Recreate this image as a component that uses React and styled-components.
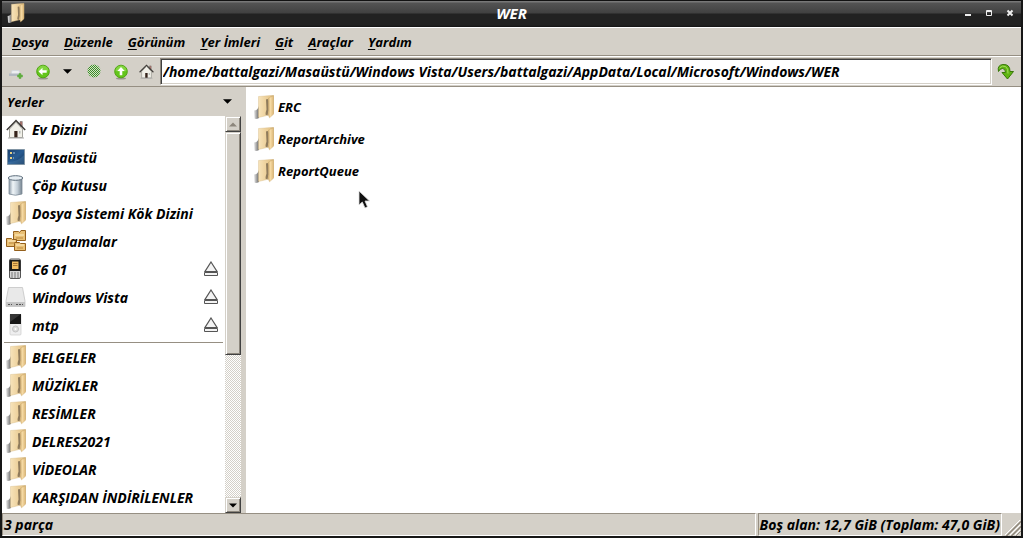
import React, { useState } from 'react';
import styled, { createGlobalStyle } from 'styled-components';

const GlobalStyle = createGlobalStyle`
  * { box-sizing: border-box; }
  body { margin: 0; }
  body, button, input {
    font-family: 'Open Sans', 'Noto Sans', sans-serif;
    font-size: 14px;
    font-weight: 700;
    font-style: italic;
    color: #000;
  }
  button {
    border: none;
    background: none;
    padding: 0;
    text-align: left;
    cursor: default;
  }
  svg { display: block; flex: none; }
`;
const Window = styled.div`
  display: flex;
  flex-direction: column;
  height: 100vh;
  border: solid #161616;
  border-width: 0 2px 2px;
  background: #d4d0c8;
  overflow: hidden;
`;
const TitleBar = styled.header`
  display: flex;
  align-items: center;
  flex: none;
  height: 27px;
  padding: 0 4px 2px;
  color: #fff;
  border-top: 1px solid #111;
  background: linear-gradient(#777 0 1px, #535353 2px, #414141 12px, #222 13px, #222 24px, #141414);
`;
const TitleSide = styled.div`
  display: flex;
  flex: 1;
  justify-content: ${(p) => (p.$end ? 'flex-end' : 'flex-start')};
  gap: 7px;
`;
const Title = styled.h1`
  margin: 0;
  font-size: 15px;
  line-height: 24px;
`;
const WindowButton = styled.button`
  display: grid;
  place-items: center;
  width: 14px;
  height: 20px;
`;
const MenuBar = styled.nav`
  display: flex;
  align-items: center;
  flex: none;
  gap: 1px;
  height: 29px;
  padding: 0 3px;
  border-top: 1px solid #fff;
  border-bottom: 1px solid #968f83;
`;
const MenuButton = styled.button`
  height: 24px;
  padding: 0 7px;
  font-size: 13px;
  u { text-underline-offset: 2px; }
`;
const Toolbar = styled.div`
  display: flex;
  align-items: center;
  flex: none;
  height: 31px;
  padding-right: 5px;
  border-top: 1px solid #fff;
  border-bottom: 1px solid #968f83;
`;
const ToolButton = styled.button`
  display: grid;
  place-items: center;
  flex: none;
  width: ${(p) => p.$width || 26}px;
  height: 26px;
`;
const PathInput = styled.input`
  flex: 1;
  min-width: 0;
  height: 27px;
  margin-right: 4px;
  padding: 0 2px;
  border: 1px solid;
  border-color: #8c867c #fff #fff #8c867c;
  border-radius: 0;
  box-shadow: inset 1px 1px #404040, inset -1px -1px #d4d0c8;
  background: #fff;
  outline: none;
`;
const Body = styled.div`
  display: flex;
  flex: 1;
  min-height: 0;
`;
const Sidebar = styled.aside`
  display: flex;
  flex-direction: column;
  flex: none;
  width: 244px;
  padding-right: 5px;
`;
const SidebarHeader = styled.button`
  display: flex;
  align-items: center;
  justify-content: space-between;
  flex: none;
  height: 29px;
  padding: 0 9px 0 5px;
  font-size: 13px;
`;
const SidebarBody = styled.div`
  display: flex;
  flex: 1;
  min-height: 0;
`;
const Places = styled.ul`
  flex: 1;
  margin: 0;
  padding: 0;
  list-style: none;
  background: #fff;
  overflow: hidden;
`;
const PlaceRow = styled.li`
  display: flex;
  align-items: center;
  height: 28px;
  padding: 0 6px 2px 4px;
`;
const PlaceButton = styled.button`
  display: flex;
  align-items: center;
  flex: 1;
  gap: 6px;
  height: 26px;
  white-space: nowrap;
`;
const IconSlot = styled.span`
  display: flex;
  align-items: center;
  justify-content: center;
  width: 20px;
`;
const Separator = styled.li`
  height: 4px;
  padding: 2px 2px 0;
  background: #968f83 content-box;
  border-bottom: 1px solid #fff;
`;
const ScrollBar = styled.div`
  display: flex;
  flex-direction: column;
  width: 16px;
  background: repeating-conic-gradient(#d4d0c8 0 25%, #fff 0 50%) 0 0 / 2px 2px;
`;
const Raised = styled.button`
  display: grid;
  place-items: center;
  flex: none;
  height: ${(p) => p.$height}px;
  border: 1px solid;
  border-color: #d4d0c8 #404040 #404040 #d4d0c8;
  box-shadow: inset 1px 1px #fff, inset -1px -1px #8c867c;
  background: #d4d0c8;
`;
const ScrollSpace = styled.div`
  flex: 1;
`;
const Files = styled.main`
  position: relative;
  flex: 1;
  padding: 4px 8px;
  background: #fff;
`;
const FileButton = styled.button`
  display: flex;
  align-items: center;
  gap: 4px;
  height: 32px;
  font-size: 13px;
`;
const Pointer = styled.svg`
  position: absolute;
  left: 112px;
  top: 103px;
`;
const StatusBar = styled.footer`
  display: flex;
  flex: none;
  gap: 2px;
  height: 23px;
`;
const StatusCell = styled.div`
  flex: ${(p) => (p.$grow ? 1 : 'none')};
  padding: 0 1px;
  line-height: 21px;
  white-space: nowrap;
  border: 1px solid;
  border-color: #968f83 #fff #fff #968f83;
`;
const Grip = styled.svg`
  align-self: flex-end;
`;

const FolderIcon = ({ size = 24 }) => (
  <svg width={size === 24 ? 20 : size} height={size} viewBox="0 0 20 24" aria-hidden="true">
    <defs>
      <linearGradient id="folderBack">
        <stop offset="0" stopColor="#f7e3ba" />
        <stop offset=".75" stopColor="#e8c88d" />
        <stop offset="1" stopColor="#c4a570" />
      </linearGradient>
      <linearGradient id="folderFront">
        <stop offset="0" stopColor="#cbaa70" />
        <stop offset=".35" stopColor="#f8dda8" />
        <stop offset="1" stopColor="#dcb777" />
      </linearGradient>
      <linearGradient id="folderBase">
        <stop offset="0" stopColor="#e8e8e8" />
        <stop offset=".6" stopColor="#999" />
        <stop offset="1" stopColor="#606060" />
      </linearGradient>
    </defs>
    <path d="M0 15.500q3.500 0 5-4.500v12q-3 1.500-4.500.5z" fill="url(#folderBase)" />
    <path d="M4.500 1.500 19.500.3v18L15 20 4.500 22.500z" fill="url(#folderBack)" stroke="#d6ba87" strokeWidth=".4" />
    <path d="M12 4.500q2.500-1.500 2.500 2v9l-1 5-2-1q.2-3 1-5z" fill="#8f7b5c" />
    <path d="M14.500 3 19.500.8v18.500L15.500 22.800q-2-3-.5-7z" fill="url(#folderFront)" stroke="#cda969" strokeWidth=".4" />
  </svg>
);

const HomeIcon = ({ size = 20 }) => (
  <svg width={size} height={size} viewBox="0 0 20 20" aria-hidden="true">
    <path d="M14 2.500h2.300v5H14z" fill="#b0746c" stroke="#666" strokeWidth=".5" />
    <path d="M3.500 10 10 3.200l6.500 6.800v8.500h-13z" fill="#f1f0e9" stroke="#8d8d85" strokeWidth=".8" />
    <path d="M.8 11 10 1.600l9.200 9.400" fill="none" stroke="#3c3936" strokeWidth="1.500" />
    <path d="M8.300 12h3.200v6.500H8.300z" fill="#35231b" />
    <path d="M13 12h1.500v2.500H13z" fill="#b5bbb9" />
    <path d="M2 19h16" stroke="#aaa" />
  </svg>
);

const DesktopIcon = () => (
  <svg width="20" height="20" viewBox="0 0 20 20" aria-hidden="true">
    <defs>
      <linearGradient id="screen" x2="1" y2="1">
        <stop offset="0" stopColor="#1c416e" />
        <stop offset=".5" stopColor="#285b91" />
        <stop offset="1" stopColor="#123052" />
      </linearGradient>
    </defs>
    <path d="M1.500 2.500h17v15h-17z" fill="url(#screen)" stroke="#8195a5" />
    <path d="M4 5h2v2H4zM4 10h2v2H4z" fill="#e8cf83" />
    <path d="M7 6h2M7 11h1" stroke="#a9c5df" />
    <path d="M2 17h16V8q-6 7-16 7" fill="#5789b7" opacity=".35" />
  </svg>
);

const TrashIcon = () => (
  <svg width="20" height="22" viewBox="1 0 20 22" aria-hidden="true">
    <defs>
      <linearGradient id="can">
        <stop offset="0" stopColor="#8998a5" />
        <stop offset=".3" stopColor="#f0f5f8" />
        <stop offset=".65" stopColor="#c3ced7" />
        <stop offset="1" stopColor="#75838f" />
      </linearGradient>
    </defs>
    <path d="M4 4v16q6.500 2.500 13 0V4z" fill="url(#can)" stroke="#7d8b97" strokeWidth=".8" />
    <ellipse cx="10.500" cy="4" rx="7.300" ry="2.300" fill="#e6edf2" stroke="#5e6e7c" />
  </svg>
);

const AppsIcon = () => (
  <svg width="22" height="22" viewBox="0 0 22 22" aria-hidden="true">
    <g fill="#e9c075" stroke="#94601d">
      <path d="M8.500 3.500v-2h5l1 1 1.500-2h4.500v10h-12z" />
      <path d="M1.500 8.500h5l1 1h4v7h-10z" />
      <path d="M9.500 12.500h5l1 1h5v7h-11z" />
    </g>
    <path d="M10 5h9M3 11h7M11 15h8" stroke="#fff0c9" />
    <path d="M11 8h7M4 13h6M12 18h6" stroke="#bd8b41" />
  </svg>
);

const PhoneIcon = () => (
  <svg width="22" height="22" viewBox="0 0 22 22" aria-hidden="true">
    <rect x="4.500" y="1" width="11" height="19.500" rx="1.500" fill="#d6d6d6" stroke="#555" />
    <path d="M4.500 2h11v11h-11z" fill="#1b1b1b" />
    <path d="M7 3.500h6.500V11H7z" fill="#f1bd63" />
    <path d="M8 5.500h4.500M8 7.500h4.500" stroke="#855821" strokeWidth=".7" />
    <path d="M6 15h8M6 17h8M6 19h8" stroke="#777" strokeDasharray="2 1" />
  </svg>
);

const DriveIcon = () => (
  <svg width="22" height="22" viewBox="0 0 22 22" aria-hidden="true">
    <path d="M3.500 1.500h14L20 15v5.500H1V15z" fill="#e9e9e9" stroke="#c4c4c4" strokeWidth=".8" />
    <path d="M1 16h19v4.500H1z" fill="#c4c4c4" />
    <path d="M3 18.500h4M11 18.500h7" stroke="#555" strokeDasharray="2 1" />
  </svg>
);

const PlayerIcon = () => (
  <svg width="22" height="22" viewBox="0 0 22 22" aria-hidden="true">
    <rect x="5" y="0" width="11" height="21" rx="1" fill="#eeeeef" stroke="#ccc" strokeWidth=".7" />
    <path d="M5 0h11v10H5z" fill="#171717" />
    <path d="M5 0h11L5 8z" fill="#353535" />
    <circle cx="10.500" cy="15" r="3" fill="#ddd" stroke="#c2c2c2" />
    <circle cx="10.500" cy="15" r="1" fill="#fff" />
  </svg>
);

const EjectIcon = () => (
  <svg width="16" height="16" viewBox="0 0 16 16" fill="#f3f3f3" stroke="#555" aria-hidden="true">
    <path d="M8 1 14 10.500H2z" strokeWidth="1.200" />
    <path d="M1.500 11.500h13v3h-13z" />
  </svg>
);

const GreenArrow = ({ up }) => (
  <svg width="16" height="16" viewBox="0 0 16 16" aria-hidden="true">
    <ellipse cx="8" cy="14.500" rx="5" ry="1" fill="#99968e" />
    <circle cx="8" cy="7.500" r="6.300" fill="#63c51b" stroke="#51a414" />
    <path d="M2.500 7a5.500 5.500 0 0 1 11 0q-5 1-11 0" fill="#98df58" opacity=".6" />
    <path d="M3.500 7.500 7.500 3.800v2.400h4.200v2.600H7.500v2.400z" fill="#fff" transform={up ? 'rotate(90 8 7.500)' : undefined} />
  </svg>
);

const NewTabIcon = () => (
  <svg width="16" height="16" viewBox="0 0 16 16" aria-hidden="true">
    <path d="M4 6.500h7l1 4H3z" fill="#eceef0" stroke="#d3d8dc" />
    <path d="M1 9.500h12V12H1z" fill="#b3b9c2" />
    <path d="M9.500 11H11V9.500h2V11h1.500v2H13v1.500h-2V13H9.500z" fill="#60ad40" stroke="#60ad40" strokeWidth=".5" />
  </svg>
);

const StopIcon = () => (
  <svg width="16" height="16" viewBox="0 0 16 16" aria-hidden="true">
    <defs>
      <pattern id="dither" width="2" height="2" patternUnits="userSpaceOnUse">
        <path d="M0 0h1v1H0zM1 1h1v1H1z" fill="#3c8a28" />
        <path d="M1 0h1v1H1zM0 1h1v1H0z" fill="#d3e4c6" />
      </pattern>
    </defs>
    <circle cx="8" cy="7" r="6.500" fill="url(#dither)" />
  </svg>
);

const GoIcon = () => (
  <svg width="18" height="18" viewBox="0 0 18 18" aria-hidden="true">
    <path
      d="M1.500 8.500Q0 2 6 1.500q7-.5 7 7h3.500L10.500 16 5 9.500h3.500q0-4-3-4-2.500 0-4 3z"
      fill="#5fb512"
      stroke="#39780a"
    />
    <path d="M2.500 5q3-3 6-1.500 3 2 2.500 7" fill="none" stroke="#a7df60" />
  </svg>
);

const Triangle = ({ width = 9, up, color = '#000' }) => (
  <svg width={width} height="5" viewBox="0 0 10 5" aria-hidden="true">
    <path d={up ? 'M0 5 5 0l5 5z' : 'M0 0h10L5 5z'} fill={color} />
  </svg>
);

const menus = [
  ['D', 'osya'],
  ['D', 'üzenle'],
  ['G', 'örünüm'],
  ['Y', 'er İmleri'],
  ['G', 'it'],
  ['A', 'raçlar'],
  ['Y', 'ardım'],
];
const places = [
  { name: 'Ev Dizini', Icon: HomeIcon },
  { name: 'Masaüstü', Icon: DesktopIcon },
  { name: 'Çöp Kutusu', Icon: TrashIcon },
  { name: 'Dosya Sistemi Kök Dizini', Icon: FolderIcon },
  { name: 'Uygulamalar', Icon: AppsIcon },
  { name: 'C6 01', Icon: PhoneIcon, eject: true },
  { name: 'Windows Vista', Icon: DriveIcon, eject: true },
  { name: 'mtp', Icon: PlayerIcon, eject: true },
];
const bookmarks = ['BELGELER', 'MÜZİKLER', 'RESİMLER', 'DELRES2021', 'VİDEOLAR', 'KARŞIDAN İNDİRİLENLER'];
const files = ['ERC', 'ReportArchive', 'ReportQueue'];

const Place = ({ name, Icon, eject }) => (
  <PlaceRow>
    <PlaceButton>
      <IconSlot><Icon /></IconSlot>
      {name}
    </PlaceButton>
    {eject && <button aria-label={`${name} çıkar`}><EjectIcon /></button>}
  </PlaceRow>
);

const App = () => {
  const [path, setPath] = useState(
    '/home/battalgazi/Masaüstü/Windows Vista/Users/battalgazi/AppData/Local/Microsoft/Windows/WER'
  );
  return (
    <Window>
      <GlobalStyle />
      <TitleBar>
        <TitleSide><FolderIcon size={20} /></TitleSide>
        <Title>WER</Title>
        <TitleSide $end>
          <WindowButton aria-label="Küçült">
            <svg width="8" height="8"><path d="M1 5h6v2H1z" fill="#eee" /></svg>
          </WindowButton>
          <WindowButton aria-label="Büyüt">
            <svg width="8" height="8"><path d="M1.500 1.500h5v5h-5zM1 2.500h6" fill="none" stroke="#eee" /></svg>
          </WindowButton>
          <WindowButton aria-label="Kapat">
            <svg width="8" height="8"><path d="m1.500 1.500 5 5m0-5-5 5" stroke="#eee" strokeWidth="2" /></svg>
          </WindowButton>
        </TitleSide>
      </TitleBar>
      <MenuBar>
        {menus.map(([key, rest]) => (
          <MenuButton key={key + rest}><u>{key}</u>{rest}</MenuButton>
        ))}
      </MenuBar>
      <Toolbar>
        <ToolButton $width={28} aria-label="Yeni sekme"><NewTabIcon /></ToolButton>
        <ToolButton aria-label="Geri"><GreenArrow /></ToolButton>
        <ToolButton $width={22} aria-label="Geçmiş"><Triangle /></ToolButton>
        <ToolButton $width={32} aria-label="Durdur"><StopIcon /></ToolButton>
        <ToolButton $width={22} aria-label="Yukarı"><GreenArrow up /></ToolButton>
        <ToolButton $width={28} aria-label="Ev"><HomeIcon size={15} /></ToolButton>
        <PathInput aria-label="Konum" value={path} onChange={(e) => setPath(e.target.value)} />
        <ToolButton $width={20} aria-label="Git"><GoIcon /></ToolButton>
      </Toolbar>
      <Body>
        <Sidebar>
          <SidebarHeader>Yerler<Triangle /></SidebarHeader>
          <SidebarBody>
            <Places>
              {places.map((place) => <Place key={place.name} {...place} />)}
              <Separator />
              {bookmarks.map((name) => <Place key={name} name={name} Icon={FolderIcon} />)}
            </Places>
            <ScrollBar>
              <Raised $height={16} aria-label="Yukarı kaydır"><Triangle width={8} up color="#8c867c" /></Raised>
              <Raised $height={223} aria-label="Kaydırma çubuğu" />
              <ScrollSpace />
              <Raised $height={16} aria-label="Aşağı kaydır"><Triangle width={8} /></Raised>
            </ScrollBar>
          </SidebarBody>
        </Sidebar>
        <Files>
          {files.map((name) => (
            <FileButton key={name}><FolderIcon />{name}</FileButton>
          ))}
          <Pointer width="12" height="19" viewBox="0 0 12 19" aria-hidden="true">
            <path d="M1 1v14l3.300-3 2.700 6 2.500-1.200L7 11h4.500z" fill="#111" stroke="#ddd" strokeWidth=".8" />
          </Pointer>
        </Files>
      </Body>
      <StatusBar>
        <StatusCell $grow>3 parça</StatusCell>
        <StatusCell>Boş alan: 12,7 GiB (Toplam: 47,0 GiB)</StatusCell>
        <Grip width="17" height="18" viewBox="0 0 17 18" aria-hidden="true">
          <path d="M1 17 16 2M6 17 16 7M11 17l5-5" stroke="#fff" />
          <path d="M2 18 17 3M3 18 17 4M7 18 17 8M8 18l9-9M12 18l5-5" stroke="#968f83" />
        </Grip>
      </StatusBar>
    </Window>
  );
};
export default App;
